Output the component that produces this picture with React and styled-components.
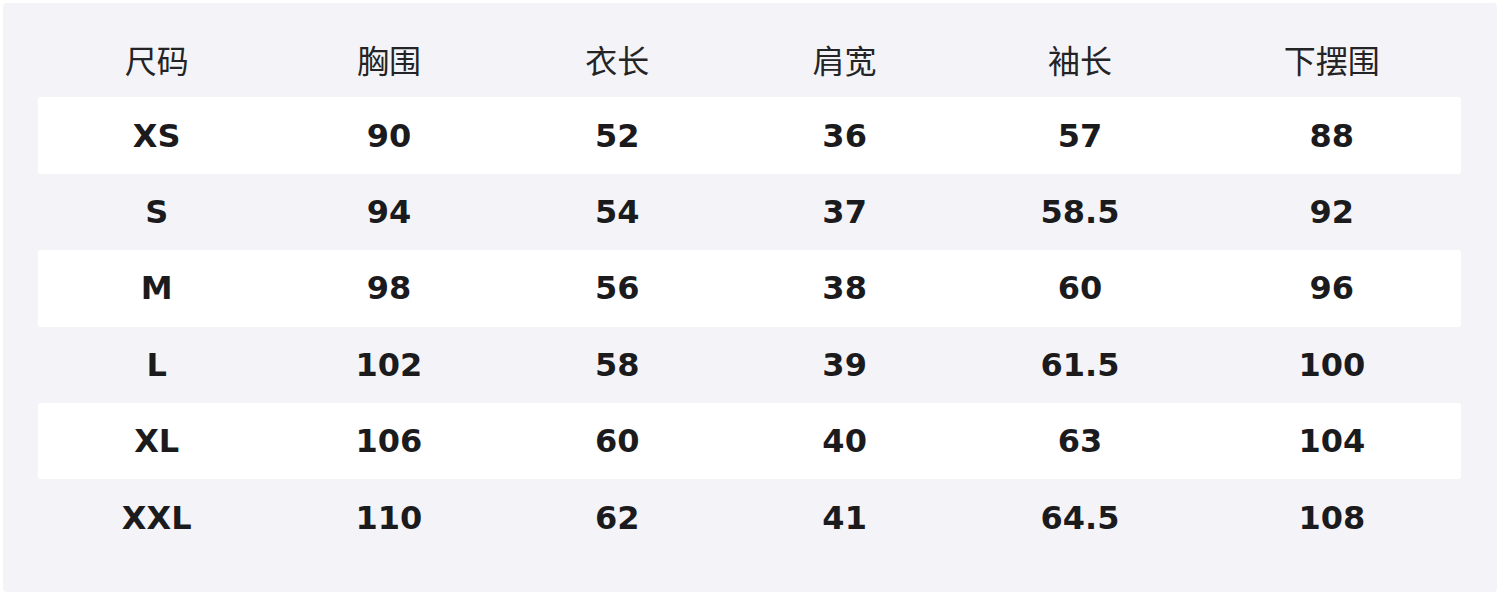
import styled, { createGlobalStyle } from "styled-components";

const GlobalStyle = createGlobalStyle`
  html, body {
    margin: 0;
    padding: 0;
    background: #ffffff;
  }
`;

const Panel = styled.section`
  box-sizing: border-box;
  width: 1494px;
  height: 589px;
  margin: 3px;
  padding: 18px 36px 36px 35px;
  background: #f4f4f8;
  border-radius: 4px;
  font-family: "DejaVu Sans", "Noto Sans CJK SC", sans-serif;
  color: #1b1b1d;
`;

const Row = styled.div`
  display: grid;
  grid-template-columns: 237fr 227fr 229fr 225fr 245fr 258fr;
  align-items: center;
  height: 76.4px;
  border-radius: 3px;
  background: ${(p) => (p.$striped ? "#ffffff" : "transparent")};
`;

const Cell = styled.div`
  text-align: center;
  font-size: 32px;
  line-height: 1;
  font-weight: ${(p) => (p.$head ? 400 : 700)};
  color: ${(p) => (p.$head ? "#242426" : "#1b1b1d")};
  font-family: ${(p) =>
    p.$head
      ? `"Noto Sans CJK SC", sans-serif`
      : `"DejaVu Sans", "Noto Sans CJK SC", sans-serif`};
`;

const headers = ["尺码", "胸围", "衣长", "肩宽", "袖长", "下摆围"];

const sizes = [
  ["XS", "90", "52", "36", "57", "88"],
  ["S", "94", "54", "37", "58.5", "92"],
  ["M", "98", "56", "38", "60", "96"],
  ["L", "102", "58", "39", "61.5", "100"],
  ["XL", "106", "60", "40", "63", "104"],
  ["XXL", "110", "62", "41", "64.5", "108"],
];

export default function App() {
  return (
    <>
      <GlobalStyle />
      <Panel>
        <Row>
          {headers.map((h) => (
            <Cell key={h} $head>
              {h}
            </Cell>
          ))}
        </Row>
        {sizes.map((row, i) => (
          <Row key={row[0]} $striped={i % 2 === 0}>
            {row.map((v, j) => (
              <Cell key={j}>{v}</Cell>
            ))}
          </Row>
        ))}
      </Panel>
    </>
  );
}
